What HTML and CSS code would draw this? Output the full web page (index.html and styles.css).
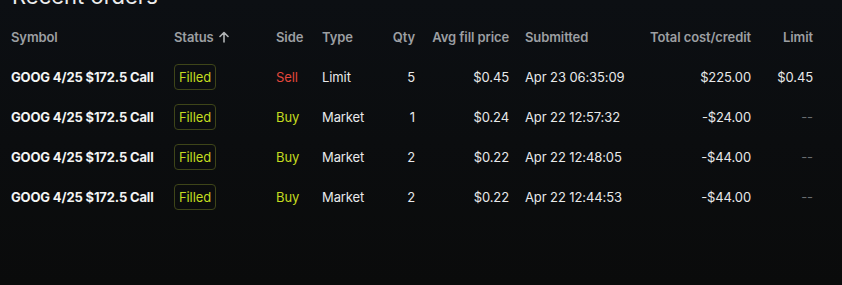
FILE: index.html
```html
<!DOCTYPE html>
<html>
<head>
<meta charset="utf-8">
<link rel="stylesheet" href="styles.css">
</head>
<body>
<div class="page">
  <h2 class="title">Recent orders</h2>
  <div class="grid">
    <div class="row head">
      <div>Symbol</div>
      <div class="sort">Status <svg width="10" height="12" viewBox="0 0 10 12"><path d="M5 11V1.5M1 5.5L5 1.5L9 5.5" fill="none" stroke="currentColor" stroke-width="1.6" stroke-linecap="round" stroke-linejoin="round"/></svg></div>
      <div>Side</div>
      <div>Type</div>
      <div class="r">Qty</div>
      <div class="r">Avg fill price</div>
      <div class="sub">Submitted</div>
      <div class="r">Total cost/credit</div>
      <div class="r">Limit</div>
    </div>
    <div class="row">
      <div class="sym">GOOG 4/25 $172.5 Call</div>
      <div><span class="badge">Filled</span></div>
      <div class="sell">Sell</div>
      <div>Limit</div>
      <div class="r">5</div>
      <div class="r">$0.45</div>
      <div class="sub">Apr 23 06:35:09</div>
      <div class="r">$225.00</div>
      <div class="r">$0.45</div>
    </div>
    <div class="row">
      <div class="sym">GOOG 4/25 $172.5 Call</div>
      <div><span class="badge">Filled</span></div>
      <div class="buy">Buy</div>
      <div>Market</div>
      <div class="r">1</div>
      <div class="r">$0.24</div>
      <div class="sub">Apr 22 12:57:32</div>
      <div class="r">-$24.00</div>
      <div class="r dim">--</div>
    </div>
    <div class="row">
      <div class="sym">GOOG 4/25 $172.5 Call</div>
      <div><span class="badge">Filled</span></div>
      <div class="buy">Buy</div>
      <div>Market</div>
      <div class="r">2</div>
      <div class="r">$0.22</div>
      <div class="sub">Apr 22 12:48:05</div>
      <div class="r">-$44.00</div>
      <div class="r dim">--</div>
    </div>
    <div class="row">
      <div class="sym">GOOG 4/25 $172.5 Call</div>
      <div><span class="badge">Filled</span></div>
      <div class="buy">Buy</div>
      <div>Market</div>
      <div class="r">2</div>
      <div class="r">$0.22</div>
      <div class="sub">Apr 22 12:44:53</div>
      <div class="r">-$44.00</div>
      <div class="r dim">--</div>
    </div>
  </div>
</div>
</body>
</html>
```

FILE: styles.css
```css
html, body {
  margin: 0;
  height: 100%;
}
body {
  background: linear-gradient(180deg, #0c0f13 0%, #0b0d0f 50%, #0a0b0b 100%);
  font-family: Inter, "Liberation Sans", sans-serif;
  color: #e8e9ea;
  overflow: hidden;
}
.page {
  padding-left: 11px;
}
.title {
  margin: -18px 0 0 1px;
  font-size: 22px;
  line-height: 28px;
  font-weight: 400;
  color: #eceded;
}
.grid {
  margin-top: 7px;
}
.row {
  display: grid;
  grid-template-columns: 163px 102px 46px 44px 49px 94px 116px 126px 62px;
  height: 40px;
  align-items: center;
  font-size: 13px;
  letter-spacing: -0.1px;
}
.row > div {
  white-space: nowrap;
}
.head {
  font-weight: 600;
  color: #9c9fa2;
}
.sort {
  display: flex;
  align-items: center;
  gap: 5px;
}
.sort svg {
  color: #b0b3b5;
}
.r {
  text-align: right;
}
.sub {
  padding-left: 16px;
}
.sym {
  font-weight: 700;
  color: #f3f4f4;
  letter-spacing: -0.15px;
}
.badge {
  display: inline-flex;
  align-items: center;
  height: 24px;
  padding: 0 4px;
  border: 1px solid #3e4519;
  border-radius: 4px;
  color: #c3dc1f;
}
.sell {
  color: #e2473b;
}
.buy {
  color: #c3dc1f;
}
.dim {
  color: #6a6d70;
}
```
